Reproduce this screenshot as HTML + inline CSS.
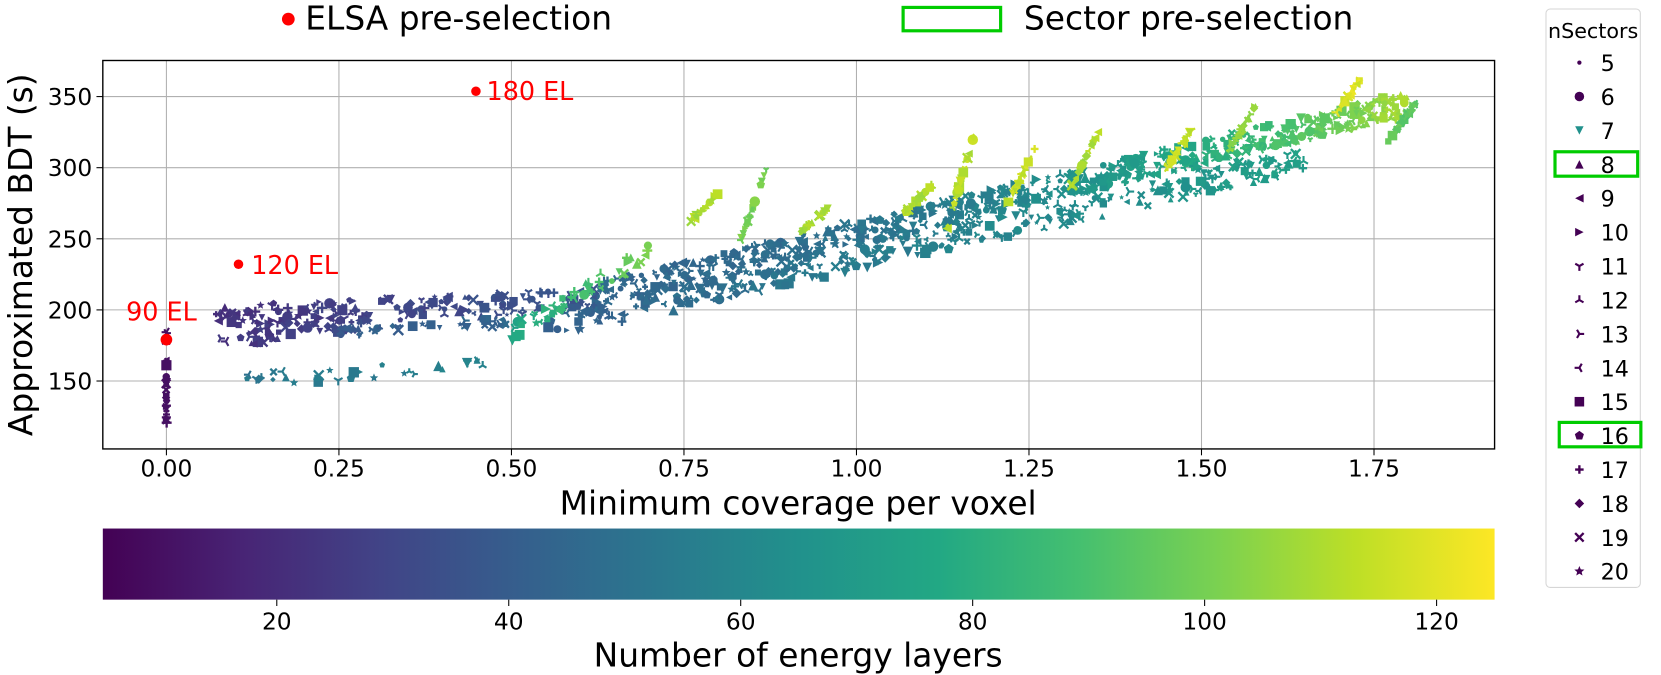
<!DOCTYPE html>
<html><head><meta charset="utf-8"><style>
html,body{margin:0;padding:0;background:#fff;}
svg{display:block;font-family:"DejaVu Sans","Liberation Sans",sans-serif;}
</style></head><body>
<svg id="s" width="1661" height="675" viewBox="0 0 1567 636" preserveAspectRatio="none" xmlns="http://www.w3.org/2000/svg">
<defs>
<linearGradient id="vir" x1="0" x2="1" y1="0" y2="0">
<stop offset="0" stop-color="#440154"/><stop offset="0.1" stop-color="#482475"/><stop offset="0.2" stop-color="#414487"/><stop offset="0.3" stop-color="#355f8d"/><stop offset="0.4" stop-color="#2a788e"/><stop offset="0.5" stop-color="#21918c"/><stop offset="0.6" stop-color="#22a884"/><stop offset="0.7" stop-color="#44bf70"/><stop offset="0.8" stop-color="#7ad151"/><stop offset="0.9" stop-color="#bddf26"/><stop offset="1" stop-color="#fde725"/>
</linearGradient>
<clipPath id="ax"><rect x="97" y="57" width="1313" height="366"/></clipPath>
</defs>
<circle cx="272" cy="18" r="6" fill="#ff0000"/>
<text x="288" y="28" font-size="31">ELSA pre-selection</text>
<rect x="852" y="7" width="92" height="22" fill="none" stroke="#00cc00" stroke-width="3"/>
<text x="966" y="28" font-size="31">Sector pre-selection</text>
<g stroke="#b0b0b0" stroke-width="1" id="grid"></g>
<g id="pts" clip-path="url(#ax)"></g>
<rect x="97" y="57" width="1313" height="366" fill="none" stroke="#000" stroke-width="1.3"/>
<g id="ticks" font-size="22"></g>
<text x="753" y="485" font-size="31" text-anchor="middle">Minimum coverage per voxel</text>
<text transform="translate(30,240) rotate(-90)" font-size="31" text-anchor="middle">Approximated BDT (s)</text>
<circle cx="157" cy="320" r="5.5" fill="#ff0000"/>
<text x="119" y="302" font-size="24" fill="#ff0000">90 EL</text>
<circle cx="225" cy="249" r="4.5" fill="#ff0000"/>
<text x="237" y="258" font-size="24" fill="#ff0000">120 EL</text>
<circle cx="449" cy="86" r="4.5" fill="#ff0000"/>
<text x="459" y="94" font-size="24" fill="#ff0000">180 EL</text>
<rect x="97" y="498" width="1313" height="67" fill="url(#vir)"/>
<g id="cb" font-size="22"></g>
<text x="753" y="628" font-size="31" text-anchor="middle">Number of energy layers</text>
<rect x="1458.5" y="8.5" width="89" height="545" rx="4" fill="#fff" stroke="#d6d6d6"/>
<text x="1503" y="36" font-size="19.5" text-anchor="middle">nSectors</text>
<g id="leg" font-size="21"></g>
<rect x="1467" y="143" width="78" height="23" fill="none" stroke="#00cc00" stroke-width="3"/>
<rect x="1471" y="398" width="77" height="23" fill="none" stroke="#00cc00" stroke-width="3"/>
</svg>
<script>
(function(){
var NS="http://www.w3.org/2000/svg";
function el(p,n,a){var e=document.createElementNS(NS,n);for(var k in a)e.setAttribute(k,a[k]);p.appendChild(e);return e;}
function X(v){return 157+v*651;}function Y(t){return 292-(t-200)*1.34;}
var grid=document.getElementById('grid'),ticks=document.getElementById('ticks');
for(var i=0;i<8;i++){var v=i*0.25,x=X(v);el(grid,'line',{x1:x,x2:x,y1:57,y2:423});el(ticks,'line',{x1:x,x2:x,y1:423,y2:429,stroke:'#000'});var t=el(ticks,'text',{x:x,y:449,'text-anchor':'middle'});t.textContent=v.toFixed(2);}
for(var j=150;j<=350;j+=50){var y=Y(j);el(grid,'line',{x1:97,x2:1410,y1:y,y2:y});el(ticks,'line',{x1:91,x2:97,y1:y,y2:y,stroke:'#000'});var t=el(ticks,'text',{x:87,y:y+8,'text-anchor':'end'});t.textContent=j;}
var cb=document.getElementById('cb');
for(var c=20;c<=120;c+=20){var x=97+(c-5)*1313/120;el(cb,'line',{x1:x,x2:x,y1:565,y2:571,stroke:'#000'});var t=el(cb,'text',{x:x,y:593,'text-anchor':'middle'});t.textContent=c;}
var stops=[[68,1,84],[72,36,117],[65,68,135],[53,95,141],[42,120,142],[33,145,140],[34,168,132],[68,191,112],[122,209,81],[189,223,38],[253,231,37]];
function col(c){var f=Math.max(0,Math.min(1,(c-5)/120))*10,i=Math.min(9,Math.floor(f)),r=f-i,a=stops[i],b=stops[i+1];return 'rgb('+[0,1,2].map(function(k){return Math.round(a[k]+(b[k]-a[k])*r)}).join(',')+')';}
var s=12345;function rnd(){s=(s*1103515245+12345)%2147483648;return s/2147483648;}
var P=document.getElementById('pts');
function tri(g,x,y,h,ang,fill){var d='';for(var a=0;a<3;a++){var t=(ang+a*120)*Math.PI/180;d+='M'+x+' '+y+'L'+(x+h*Math.cos(t))+' '+(y+h*Math.sin(t));}el(g,'path',{d:d,stroke:fill,'stroke-width':2,fill:'none'});}
function star(g,x,y,h,fill){var p=[];for(var a=0;a<10;a++){var r=a%2?h*0.45:h,t=(-90+a*36)*Math.PI/180;p.push((x+r*Math.cos(t))+','+(y+r*Math.sin(t)));}el(g,'polygon',{points:p.join(' '),fill:fill});}
function mk(g,x,y,sh,z,fill){
 var h=z/2;
 switch(sh){
 case 0:el(g,'circle',{cx:x,cy:y,r:h,fill:fill});break;
 case 1:el(g,'rect',{x:x-h,y:y-h,width:z,height:z,fill:fill});break;
 case 2:el(g,'polygon',{points:(x-h)+','+(y+h)+' '+(x+h)+','+(y+h)+' '+x+','+(y-h),fill:fill});break;
 case 3:el(g,'polygon',{points:(x-h)+','+(y-h)+' '+(x+h)+','+(y-h)+' '+x+','+(y+h),fill:fill});break;
 case 4:el(g,'path',{d:'M'+(x-h)+' '+(y-h)+'L'+(x+h)+' '+(y+h)+'M'+(x-h)+' '+(y+h)+'L'+(x+h)+' '+(y-h),stroke:fill,'stroke-width':2.2,fill:'none'});break;
 case 5:el(g,'path',{d:'M'+(x-h)+' '+y+'H'+(x+h)+'M'+x+' '+(y-h)+'V'+(y+h),stroke:fill,'stroke-width':2.2,fill:'none'});break;
 case 6:el(g,'polygon',{points:x+','+(y-h)+' '+(x+h)+','+y+' '+x+','+(y+h)+' '+(x-h)+','+y,fill:fill});break;
 case 7:el(g,'polygon',{points:(x-h)+','+(y-h)+' '+(x+h)+','+y+' '+(x-h)+','+(y+h),fill:fill});break;
 case 8:el(g,'polygon',{points:(x+h)+','+(y-h)+' '+(x-h)+','+y+' '+(x+h)+','+(y+h),fill:fill});break;
 case 9:tri(g,x,y,h,-90,fill);break;
 case 10:tri(g,x,y,h,90,fill);break;
 case 11:tri(g,x,y,h,0,fill);break;
 case 12:tri(g,x,y,h,180,fill);break;
 case 13:star(g,x,y,h,fill);break;
 case 14:var p=[];for(var a=0;a<5;a++){var t=(-90+a*72)*Math.PI/180;p.push((x+h*Math.cos(t))+','+(y+h*Math.sin(t)));}el(g,'polygon',{points:p.join(' '),fill:fill});break;
 }}
function pt(v,t,c){mk(P,X(v),Y(t),Math.floor(rnd()*15),5+rnd()*5,col(c));}
function band(v0,v1,t0,t1,c0,c1,n,jt,pw){for(var i=0;i<n;i++){var f=rnd();pt(v0+(v1-v0)*f,t0+(t1-t0)*f+(rnd()-0.5)*jt,c0+(c1-c0)*Math.pow(f,pw||1)+(rnd()-0.5)*6);}}
band(0.62,1.8,210,345,45,110,650,18,2.2);
band(0.55,1.65,188,305,42,72,320,16);
band(0.07,0.62,195,207,22,38,170,16);
band(0.07,0.3,178,190,22,32,45,10);
band(0.25,0.5,184,192,40,45,40,6);
band(0.11,0.46,150,162,52,58,30,10);
band(0.5,0.7,184,240,75,100,50,12);
for(var i=0;i<30;i++)pt(0.001*(rnd()-0.5),118+rnd()*70,10);
[[0.79,262,282,110],[0.86,245,300,100],[0.95,255,272,110],[1.1,268,288,110],[1.16,255,322,112],[1.25,275,315,115],[1.34,285,325,110],[1.48,300,330,115],[1.57,312,345,105],[1.72,335,362,118],[1.8,318,345,95]].forEach(function(a){for(var i=0;i<22;i++){var f=rnd();pt(a[0]-0.03+f*0.04,a[1]+(a[2]-a[1])*f,a[3]+(rnd()-0.5)*8);}});
band(1.45,1.6,298,305,70,72,12,4);
var leg=document.getElementById('leg');
for(var k=0;k<16;k++){var y=59+k*31.95;var sh=[0,0,3,2,8,7,10,9,11,12,1,14,5,6,4,13][k];var z=[4,9,8,8,8,8,9,9,9,9,9,9,8,9,8,10][k];
 var fill=k==2?'#21918c':'#440154';
 mk(leg,1490,y,sh,z,fill);
 var t=el(leg,'text',{x:1510,y:y+8});t.textContent=5+k;}
})();
</script>
</body></html>
